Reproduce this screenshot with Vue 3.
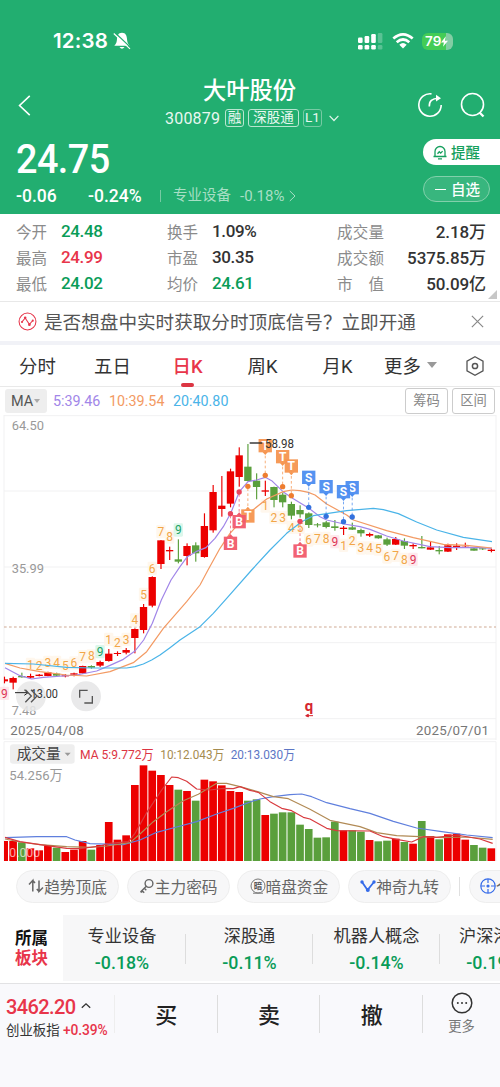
<template>
  <main>
    <header>
      <div class="status">
        <span class="time">12:38</span>
        <svg class="mute" viewBox="0 0 18 18">
          <path d="M9 .8C5.300.800 4.200 3.800 4 7 3.800 10 3.300 11.800 1.300 13.800H16.700C14.700 11.800 14.200 10 14 7 13.800 3.800 12.700.800 9 .8zM6.500 15h5Q9 18.600 6.500 15z" fill="#fff" />
          <path d="M2 .8 18 15.900" stroke="#22ae70" stroke-width="1.200" />
          <path d="M.8 1.500 17 16.900" stroke="#fff" stroke-width="1.200" />
        </svg>
        <svg class="signal" viewBox="0 0 25 17">
          <g fill="#fff">
            <rect x="0" y="4.500" width="4.600" height="5.500" rx="1.200" />
            <rect x="6.600" y="3" width="4.600" height="7" rx="1.200" />
            <rect x="13.200" y="1" width="4.600" height="9" rx="1.200" />
            <rect x="0" y="12" width="4.600" height="4.500" rx="1.200" />
            <rect x="6.600" y="12" width="4.600" height="4.500" rx="1.200" />
            <rect x="13.200" y="12" width="4.600" height="4.500" rx="1.200" />
          </g>
          <g fill="#fff" opacity=".25">
            <rect x="19.800" y="0" width="4.600" height="10" rx="1.200" />
            <rect x="19.800" y="12" width="4.600" height="4.500" rx="1.200" />
          </g>
        </svg>
        <svg class="wifi" viewBox="0 0 22 16">
          <g fill="none" stroke="#fff" stroke-width="2.700">
            <path d="M1.300 5.600Q11-2.800 20.700 5.600" />
            <path d="M4.700 9.300Q11 3.700 17.300 9.300" />
          </g>
          <path d="M7.300 11.700Q11 8.500 14.700 11.700L11 15.600z" fill="#fff" />
        </svg>
        <div class="battery">
          <span>79</span>
          <svg viewBox="0 0 8 12"><path d="M5.500 0 0 7h3.300L2.300 12 8 5H4.700z" fill="#fff" /></svg>
        </div>
      </div>
      <div class="title-row">
        <svg class="back" viewBox="0 0 12 20"><path d="M11 .8 1.300 10 11 19.200" fill="none" stroke="#fff" stroke-width="1.500" /></svg>
        <div class="title">
          <h1>大叶股份</h1>
          <div class="code">
            <span class="num">300879</span>
            <span class="tag">融</span>
            <span class="tag wide">深股通</span>
            <span class="tag dim">L1</span>
            <svg viewBox="0 0 10 7"><path d="M.6.800 5 5.500 9.400.800" fill="none" stroke="#e0f6eb" stroke-width="1.200" /></svg>
          </div>
        </div>
        <svg class="share" viewBox="0 0 26 26" fill="none" stroke="#fff" stroke-width="1.600">
          <path d="M14.500 1.900A11.200 11.200 0 1 0 24.200 13" />
          <path d="M12.300 14.500C12 9 15 6.500 21.500 6.200" />
          <path d="M19 2.800 24 6.200 19 9.600z" fill="#fff" stroke="none" />
        </svg>
        <svg class="search" viewBox="0 0 26 26" fill="none" stroke="#fff" stroke-width="1.600">
          <circle cx="12.500" cy="12.500" r="11" /><path d="m19.500 20.500 4 4" stroke-width="2.300" />
        </svg>
      </div>
      <div class="quote">
        <div>
          <div class="price num">24.75</div>
          <div class="change num">
            <span class="diff">-0.06</span>
            <span class="rate">-0.24%</span>
            <i></i>
            <span class="sector">专业设备</span>
            <span class="sector-rate">-0.18%</span>
            <svg viewBox="0 0 7 12"><path d="m.8 1 5.200 5-5.200 5" fill="none" stroke="#a7dfc5" /></svg>
          </div>
        </div>
        <div class="actions">
          <div class="remind">
            <svg viewBox="0 0 14 15" fill="none" stroke="#159f5d" stroke-width="1.300">
              <path d="M.5 11.500h13M2 11V6.500a5 5 0 0 1 10 0V11M5 13.800h4M4.500 8.700l1.800-2 1.400 1.400 1.900-2" />
            </svg>
            <span>提醒</span>
          </div>
          <div class="fav"><i></i><span>自选</span></div>
        </div>
      </div>
    </header>

    <section class="stats">
      <div v-for="(col, c) in stats" :key="c" class="stat-col">
        <div v-for="s in col" :key="s.label" class="stat">
          <span class="label"><b v-for="ch in s.label" :key="ch">{{ ch }}</b></span>
          <span class="num value" :class="s.color">{{ s.value }}</span>
        </div>
      </div>
      <svg class="corner" viewBox="0 0 9 9"><path d="M9 0v9H0z" fill="#c7c7c7" /></svg>
    </section>

    <section class="notice">
      <svg viewBox="0 0 18 18" fill="none" stroke="#e6364b">
        <circle cx="9" cy="9" r="8" /><path d="m3.800 9.300 3-3.600 4 6 3-3.400" />
        <g fill="#e6364b" stroke="none"><circle cx="3.800" cy="9.500" r="1" /><circle cx="6.800" cy="5.500" r="1.200" /><circle cx="10.800" cy="12" r="1.300" /><circle cx="14" cy="8.200" r="1" /></g>
      </svg>
      <span>是否想盘中实时获取分时顶底信号？立即开通</span>
      <svg class="close" viewBox="0 0 12 12"><path d="m.8.800 10.400 10.400m0-10.400L.8 11.200" stroke="#888" stroke-width="1.100" /></svg>
    </section>

    <nav>
      <span v-for="t in tabs" :key="t" :class="{ active: t == current }" @click="current = t">{{ t }}</span>
      <span class="more-tab">更多<i></i></span>
      <svg viewBox="0 0 20 20" fill="none" stroke="#555" stroke-width="1.300">
        <path d="M10 .8 18 5.200v9.600L10 19.200 2 14.800V5.200z" /><circle cx="10" cy="10" r="2.600" stroke-width="1.500" />
      </svg>
    </nav>

    <div class="ma-row num">
      <span class="select">MA<i></i></span>
      <span class="ma5">5:39.46</span>
      <span class="ma10">10:39.54</span>
      <span class="ma20">20:40.80</span>
      <span class="btn">筹码</span>
      <span class="btn">区间</span>
    </div>

    <!-- both charts use three units per pixel -->
    <svg class="kline" viewBox="0 15 1500 975">
      <path class="grid" d="M12 15V990M1488 15V990M12 17H1488M12 243H1488M12 471H1488M12 698H1488M12 926H1488M12 987H1488" />
      <path d="M12 651H1488" stroke="#cfaa93" stroke-width="3.500" stroke-dasharray="8 7" />
      <g class="axis">
        <text x="35" y="59" textLength="97" lengthAdjust="spacingAndGlyphs">64.50</text>
        <text x="35" y="488" textLength="97" lengthAdjust="spacingAndGlyphs">35.99</text>
        <text x="35" y="916" textLength="74" lengthAdjust="spacingAndGlyphs">7.48</text>
        <text class="date" x="31" y="976" textLength="220">2025/04/08</text>
        <text class="date" x="1248" y="976" textLength="219">2025/07/01</text>
      </g>
      <g v-for="(k, i) in candles" :key="i">
        <rect :x="cx(i) - 1.5" :y="k[3]" width="3.500" :height="k[4] - k[3]" :fill="k[0] ? up : down" />
        <rect :x="i ? cx(i) - 11 : 12" :y="k[1]" :width="i ? 22 : 12" :height="k[2] - k[1]" :fill="k[0] ? up : down" />
      </g>
      <g v-for="(n, i) in turns" :key="'n' + i">
        <rect :x="cx(n[0]) - 14" :y="n[2] - 20" width="28" height="40" rx="4" :fill="turnColor(n)[1]" opacity=".7" />
        <text class="turn" :x="cx(n[0])" :y="n[2] + 13" :fill="turnColor(n)[0]">{{ n[1] }}</text>
      </g>
      <g fill="none" stroke-width="3.600" stroke-linejoin="round">
        <polyline :points="ma5" stroke="#a186e8" />
        <polyline :points="ma10" stroke="#f39a63" />
        <polyline :points="ma20" stroke="#4ab4e8" />
      </g>
      <g v-for="(m, i) in marks" :key="'m' + i">
        <path :d="`M${cx(m[0])} ${m[2]}V${m[3]}`" :stroke="markColor[m[1]]" stroke-width="3" stroke-dasharray="8 7" opacity=".75" />
        <circle :cx="cx(m[0])" :cy="m[3]" r="8" :fill="markColor[m[1] + 'dot']" />
        <path :d="tail(m)" :fill="markColor[m[1]]" />
        <rect :x="cx(m[0]) - 20" :y="m[2] - 20" width="40" height="40" :fill="markColor[m[1]]" opacity=".95" />
        <text class="mark" :x="cx(m[0])" :y="m[2] + 13">{{ m[1] }}</text>
      </g>
      <path d="M749 99H787" stroke="#222" stroke-width="4" />
      <text class="peak" x="795" y="113" textLength="87" lengthAdjust="spacingAndGlyphs">58.98</text>
      <circle cx="93" cy="859" r="45" fill="#e7e7e8" opacity=".85" />
      <circle cx="258" cy="859" r="45" fill="#e9e9ea" />
      <path d="M45 848H84M73 840l11 8-11 8" fill="none" stroke="#222" stroke-width="3" />
      <text class="peak" x="92" y="863" textLength="82" lengthAdjust="spacingAndGlyphs">13.00</text>
      <g fill="none" stroke="#555" stroke-width="4">
        <path d="m76 839 18 19-18 19m17-38 18 19-18 19" />
        <path d="M239 863v-22h24M277 858v21h-24" />
      </g>
      <text x="927" y="903" class="q">q</text>
      <path d="M939 917h-20m6-4-8 4 8 4z" fill="#d52630" stroke="#d52630" stroke-width="3" />
    </svg>

    <svg class="volume" viewBox="0 0 1500 363">
      <path class="grid" d="M12 5V363M1488 5V363M12 5H1488" />
      <rect x="30" y="13" width="194" height="58" rx="9" fill="#eee" />
      <text x="50" y="56" class="vol-name" textLength="132">成交量</text>
      <path d="M194 38h18l-9 10z" fill="#999" />
      <g class="vol-ma">
        <text x="240" y="56" fill="#dc3543" textLength="221" lengthAdjust="spacingAndGlyphs">MA 5:9.772万</text>
        <text x="481" y="56" fill="#a58b4f" textLength="192" lengthAdjust="spacingAndGlyphs">10:12.043万</text>
        <text x="692" y="56" fill="#5c76c5" textLength="193" lengthAdjust="spacingAndGlyphs">20:13.030万</text>
      </g>
      <text class="vol-max" x="28" y="120" textLength="160" lengthAdjust="spacingAndGlyphs">54.256万</text>
      <rect v-for="(v, i) in volumes" :key="i" :x="i ? cx(i) - 11.5 : 12" :y="v" :width="i ? 23 : 12" :height="363 - v" :fill="volDown.includes(i) ? down : up" />
      <text class="zero" x="28" y="350" textLength="92" lengthAdjust="spacingAndGlyphs">0.000</text>
      <g fill="none" stroke-width="3.500" stroke-linejoin="round">
        <polyline :points="vma20" stroke="#5f7fdd" />
        <polyline :points="vma10" stroke="#b18a55" />
        <polyline :points="vma5" stroke="#d83a3e" />
      </g>
    </svg>

    <section class="chips">
      <div class="chip">
        <svg viewBox="0 0 16 16" fill="none" stroke="#666" stroke-width="1.500"><path d="M1 6.500 4.800 2.500V13.500M4.800 2.500 7 5M15 9.500 11 13.500V2.500M11 13.500 8.800 11" /></svg>趋势顶底
      </div>
      <div class="chip">
        <svg viewBox="0 0 16 16" fill="none" stroke="#666" stroke-width="1.400"><circle cx="10" cy="5.500" r="3.900" /><path d="M7.300 8.200 1.500 14M3 12.500l2.200 2.200M1.500 14h1.800M5.300 10.300l2 2" /></svg>主力密码
      </div>
      <div class="chip">
        <svg viewBox="0 0 16 16" fill="none" stroke="#777"><circle cx="8" cy="8" r="7" /><path d="M3 15.200h10" /><text x="8" y="11.200" font-size="8.500" text-anchor="middle" fill="#555" stroke="none" font-weight="700">暗</text></svg>暗盘资金
      </div>
      <div class="chip">
        <svg viewBox="0 0 16 16"><path d="m2 4 5.500 8L14 4" fill="none" stroke="#356be9" stroke-width="1.800" /><g fill="#356be9"><circle cx="2" cy="4" r="1.700" /><circle cx="7.800" cy="12" r="2" /><circle cx="14" cy="4" r="1.700" /></g></svg>神奇九转
      </div>
      <i></i>
      <div class="chip last">
        <svg viewBox="0 0 16 16" fill="none" stroke="#356be9" stroke-width="1.200"><circle cx="8" cy="8" r="7.200" /><path d="M8 1v4m0 6v4M1 8h4m6 0h4" /><circle cx="8" cy="8" r="1" fill="#356be9" /></svg>个股
      </div>
    </section>

    <section class="sectors">
      <div class="belong"><b>所属</b><b class="red">板块</b></div>
      <div class="sector-list">
        <div v-for="s in sectors" :key="s.name" class="sector-item">
          <span>{{ s.name }}</span>
          <span class="num green">{{ s.rate }}</span>
        </div>
      </div>
    </section>

    <footer>
      <div class="index">
        <div class="num red point">3462.20<svg viewBox="0 0 10 7"><path d="m.8 5.800 4.200-4 4.200 4" fill="none" stroke="#333" stroke-width="1.300" /></svg></div>
        <div class="index-name">创业板指 <span class="num red">+0.39%</span></div>
      </div>
      <div class="trade">买</div>
      <div class="trade">卖</div>
      <div class="trade">撤</div>
      <div class="more">
        <svg viewBox="0 0 22 22"><circle cx="11" cy="11" r="9.800" fill="none" stroke="#333" stroke-width="1.500" /><g fill="#333"><circle cx="6.800" cy="11" r="1" /><circle cx="11" cy="11" r="1" /><circle cx="15.200" cy="11" r="1" /></g></svg>
        更多
      </div>
    </footer>
  </main>
</template>

<script setup>
  import { ref } from "vue";

  const up = "#ec0000";
  const down = "#5a9f3c";

  const stats = [
    [
      { label: "今开", value: "24.48", color: "green" },
      { label: "最高", value: "24.99", color: "red" },
      { label: "最低", value: "24.02", color: "green" },
    ],
    [
      { label: "换手", value: "1.09%" },
      { label: "市盈", value: "30.35" },
      { label: "均价", value: "24.61", color: "green" },
    ],
    [
      { label: "成交量", value: "2.18万" },
      { label: "成交额", value: "5375.85万" },
      { label: "市值", value: "50.09亿" },
    ],
  ];

  const tabs = ["分时", "五日", "日K", "周K", "月K"];
  const current = ref("日K");

  const sectors = [
    { name: "专业设备", rate: "-0.18%" },
    { name: "深股通", rate: "-0.11%" },
    { name: "机器人概念", rate: "-0.14%" },
    { name: "沪深港通", rate: "-0.19%" },
  ];

  const cx = (i) => 13.2 + i * 26.085;

  // rising, body top, body bottom, high, low
  const candles = [
    [1, 808, 814, 800, 820], [1, 804, 818, 800, 838], [0, 798, 802, 788, 803], [1, 798, 803, 791, 806],
    [1, 794, 798, 792, 799], [1, 787, 798, 785, 799], [0, 791, 797, 788, 800], [1, 796, 799, 792, 802],
    [1, 790, 794, 788, 799], [1, 768, 790, 767, 791], [0, 768, 773, 766, 776], [1, 756, 767, 752, 771],
    [1, 731, 753, 717, 755], [1, 729, 732, 724, 738], [1, 720, 728, 714, 733], [1, 657, 684, 655, 730],
    [1, 591, 660, 582, 670], [1, 501, 587, 499, 592], [1, 391, 462, 390, 477], [1, 420, 424, 410, 450],
    [0, 448, 455, 388, 460], [1, 408, 438, 400, 466], [0, 406, 430, 397, 455], [1, 348, 441, 310, 443],
    [1, 246, 361, 225, 368], [1, 287, 297, 198, 320], [1, 184, 281, 176, 292], [1, 136, 201, 112, 230],
    [0, 170, 213, 102, 214], [0, 212, 231, 190, 268], [1, 241, 245, 212, 258], [0, 231, 270, 230, 292],
    [0, 254, 277, 248, 292], [0, 282, 317, 275, 328], [0, 300, 313, 286, 323], [0, 310, 345, 307, 354],
    [0, 343, 346, 339, 352], [0, 337, 351, 333, 355], [0, 349, 354, 330, 362], [1, 353, 357, 348, 375],
    [0, 352, 359, 338, 360], [0, 360, 370, 356, 380], [1, 372, 377, 368, 381], [0, 376, 385, 375, 386],
    [0, 388, 404, 383, 408], [1, 387, 404, 381, 405], [0, 393, 407, 385, 417], [1, 405, 409, 400, 417],
    [0, 411, 415, 378, 415], [1, 412, 419, 393, 420], [0, 420, 424, 408, 433], [1, 406, 425, 401, 426],
    [1, 407, 412, 400, 420], [1, 410, 412, 398, 412], [0, 415, 422, 414, 422], [0, 415, 418, 414, 420],
    [1, 419, 423, 414, 427],
  ];

  const turns = [
    [0, 9, 850, "red"],
    [3, 1, 763], [4, 2, 766], [5, 3, 757], [6, 4, 757], [7, 5, 766], [8, 6, 759], [9, 7, 740], [10, 8, 738],
    [11, 9, 725, "green"],
    [12, 1, 688], [13, 2, 698], [14, 3, 688], [15, 4, 630], [16, 5, 553], [17, 6, 475], [18, 7, 365], [19, 8, 381],
    [20, 9, 360, "green"],
    [30, 1, 288], [31, 2, 322], [32, 3, 323], [33, 4, 352], [34, 5, 352], [35, 6, 390], [36, 7, 385], [37, 8, 385],
    [38, 9, 395, "red"],
    [39, 1, 406], [40, 2, 392], [41, 3, 414], [42, 4, 414], [43, 5, 417], [44, 6, 441], [45, 7, 436], [46, 8, 448],
    [47, 9, 448, "red"],
  ];

  const turnColor = (n) => {
    if (n[3] == "red") return ["#dd3656", "#fde0e4"];
    if (n[3] == "green") return ["#21a366", "#cdf3e2"];
    return ["#f2a648", "#fff4e6"];
  };

  // candle index, letter, box centre, dot centre
  const marks = [
    [26, "B", 400, 311], [28, "T", 318, 229], [27, "B", 335, 246], [30, "T", 107, 196], [32, "T", 140, 230],
    [33, "T", 168, 257], [34, "B", 423, 334], [35, "S", 202, 292], [37, "S", 230, 319], [40, "S", 233, 321],
    [39, "S", 245, 335],
  ];

  const markColor = {
    B: "#f15a6b",
    Bdot: "#e9455c",
    T: "#f6954f",
    Tdot: "#ee7d30",
    S: "#4c8df0",
    Sdot: "#3271de",
  };

  const tail = (m) => {
    const dir = m[3] > m[2] ? 1 : -1;
    const y = m[2] + dir * 19;
    return `M${cx(m[0]) - 8} ${y}h16l-8 ${dir * 9}z`;
  };

  const ma5 =
    "15,773 60,797 95,807 130,802 230,795 290,783 330,766 370,748 405,723 431,690 457,640 484,570 513,510 540,470 562,440 588,425 618,413 645,385 670,350 692,310 718,245 744,215 770,210 796,202 815,212 849,245 880,266 927,295 960,320 980,330 1032,342 1080,350 1110,358 1160,378 1210,393 1290,410 1350,413 1430,412 1476,415";
  const ma10 =
    "15,760 60,774 120,785 200,795 260,798 330,785 400,758 440,725 490,655 560,575 600,525 624,480 660,415 690,370 740,315 800,267 850,245 875,240 900,242 925,247 945,255 980,282 1040,315 1060,330 1160,362 1240,383 1330,403 1400,406 1476,414";
  const ma20 =
    "15,760 100,762 200,772 280,774 380,774 405,770 430,762 455,750 480,735 510,713 540,690 600,650 640,610 680,565 755,480 810,420 860,370 905,335 940,317 980,311 1040,302 1120,295 1150,299 1195,311 1250,336 1310,360 1390,382 1476,395";

  // top edge of every bar
  const volumes = [
    303, 303, 307, 325, 331, 317, 323, 336, 329, 303, 329, 315, 246, 299, 286, 135, 76, 92, 105, 135, 149, 153, 182,
    119, 124, 136, 153, 156, 182, 178, 225, 221, 217, 217, 254, 267, 293, 292, 245, 271, 271, 275, 300, 304, 302, 296,
    306, 311, 243, 288, 298, 283, 281, 299, 315, 323, 325,
  ];
  const volDown = [2, 6, 10, 20, 22, 28, 29, 31, 32, 33, 34, 35, 36, 37, 38, 40, 41, 43, 44, 46, 48, 50, 54, 55];

  const vma5 =
    "15,292 60,305 120,314 200,325 240,326 300,318 330,310 385,305 405,280 440,218 485,150 515,111 535,113 560,124 590,147 630,150 670,145 700,146 720,140 750,151 775,157 810,185 845,205 875,212 910,232 930,237 980,265 1010,272 1110,273 1150,290 1190,298 1235,306 1270,290 1310,292 1370,285 1440,297 1478,310";
  const vma10 =
    "15,297 60,306 120,314 200,320 270,322 320,318 390,308 420,282 460,245 500,215 550,182 595,163 650,130 680,130 720,140 770,154 820,170 865,176 930,208 990,241 1080,260 1130,278 1190,287 1260,290 1330,293 1400,291 1478,298";
  const vma20 =
    "15,293 110,290 200,290 225,300 270,311 370,314 420,300 470,277 530,261 590,245 650,222 700,205 750,186 780,177 820,170 870,164 905,162 935,170 980,188 1050,206 1110,220 1180,244 1250,264 1320,274 1400,285 1478,293";
</script>

<style>
  body {
    background: #f9f9fc;
    overflow: hidden;
  }
</style>

<style scoped>
  * {
    box-sizing: border-box;
  }
  main {
    width: 500px;
    height: 1087px;
    background: #fff;
    font-family: Roboto, "Noto Sans CJK SC", sans-serif;
    color: #333;
    overflow: hidden;
    display: flex;
    flex-direction: column;
  }
  main > * {
    flex-shrink: 0;
  }
  svg {
    flex-shrink: 0;
  }
  .green {
    color: #099c58;
  }
  .red {
    color: #e8354a;
  }
  header {
    height: 214px;
    background: #22ae70;
    color: #fff;
  }

  .status {
    padding: 27px 44px 0 53px;
    display: flex;
    align-items: center;
    height: 55px;
  }
  .time {
    font: 600 20.5px/28px Inter, sans-serif;
    letter-spacing: 0.2px;
    width: 60px;
  }
  .mute {
    width: 18px;
    height: 18px;
  }
  .signal {
    width: 25px;
    height: 17px;
    margin-left: auto;
  }
  .wifi {
    width: 22px;
    height: 16px;
    margin-left: 9px;
  }
  .battery {
    width: 31px;
    height: 17px;
    border-radius: 6px;
    margin: 0 3px 0 8px;
    background: linear-gradient(90deg, #43cc56 79%, #83cda4 79%);
    display: flex;
    align-items: center;
    padding-left: 3px;
    font: 600 13.5px/17px Inter, sans-serif;
  }
  .battery svg {
    width: 7px;
    height: 11px;
  }
  .title-row {
    height: 79px;
    padding: 20px 14px 0 18px;
    display: flex;
    align-items: flex-start;
  }
  .back {
    width: 13px;
    height: 21px;
    margin-top: 20px;
  }
  .title {
    margin-left: 134px;
    width: 180px;
    flex-shrink: 0;
  }
  h1 {
    margin: 1px 0 0 -5px;
    width: 179px;
    font-size: 23.3px;
    line-height: 30px;
    font-weight: 500;
    text-align: center;
  }
  .code {
    display: flex;
    align-items: center;
    height: 24px;
    color: #e9f8f1;
  }
  .code .num {
    font-size: 16px;
    letter-spacing: 0.2px;
    width: 60px;
  }
  .tag {
    border: 1px solid #b8e5d0;
    border-radius: 3px;
    height: 18px;
    width: 19px;
    font-size: 13.5px;
    line-height: 15px;
    text-align: center;
    margin-right: 4px;
  }
  .tag.wide {
    width: 51px;
  }
  .tag.dim {
    border-color: #76caa3;
  }
  .code svg {
    width: 10px;
    height: 7px;
    margin-left: 3px;
  }
  .share {
    width: 26px;
    height: 26px;
    margin: 17px 0 0 72px;
  }
  .search {
    width: 26px;
    height: 26px;
    margin: 17px 0 0 auto;
  }
  .quote {
    display: flex;
    justify-content: space-between;
    padding: 5px 0 0 16px;
  }
  .price {
    font-size: 40px;
    line-height: 42px;
    font-weight: 500;
    letter-spacing: -0.6px;
    transform: scaleX(0.945);
    transform-origin: left;
  }
  .change {
    display: flex;
    align-items: center;
    font-size: 17.5px;
    line-height: 24px;
    margin-top: 3px;
    font-weight: 500;
  }
  .diff {
    width: 72px;
  }
  .rate {
    width: 72px;
  }
  .change i {
    width: 1px;
    height: 12px;
    background: #76caa3;
    margin-right: 12px;
  }
  .sector,
  .sector-rate {
    font-weight: 400;
    font-size: 14.5px;
    color: #a7dfc5;
  }
  .sector-rate {
    font-size: 15px;
    margin: 0 5px 0 9px;
  }
  .change svg {
    width: 7px;
    height: 12px;
  }
  .remind {
    width: 77px;
    height: 26px;
    background: #fff;
    border-radius: 13px 0 0 13px;
    color: #159f5d;
    font-size: 14.5px;
    font-weight: 500;
    display: flex;
    align-items: center;
    padding-left: 10px;
  }
  .actions span {
    margin-top: -2px;
  }
  .remind svg {
    width: 14px;
    height: 15px;
    margin-right: 4px;
  }
  .fav {
    width: 67px;
    height: 26px;
    border: 1px solid #82d0ab;
    background: #38b67e;
    border-radius: 13px;
    margin-top: 11px;
    font-size: 14.5px;
    font-weight: 500;
    display: flex;
    align-items: center;
    padding-left: 11px;
  }
  .fav i {
    width: 11px;
    height: 1px;
    background: #fff;
    margin-right: 5px;
  }

  .stats {
    height: 88px;
    padding: 4px 14px 0 16px;
    display: flex;
    border-bottom: 1px solid #e8e8e8;
    position: relative;
  }
  .stat-col {
    width: 151px;
  }
  .stat-col:nth-child(2) {
    width: 170px;
  }
  .stat-col:nth-child(3) {
    width: 149px;
  }
  .stat {
    height: 26px;
    display: flex;
    align-items: center;
  }
  .label {
    color: #8b8b8b;
    font-size: 15.5px;
    width: 45px;
    display: flex;
    margin-top: -1px;
  }
  .label b {
    font-weight: 400;
  }
  .stat-col:nth-child(3) .label {
    width: 47px;
    justify-content: space-between;
  }
  .value {
    font-size: 17px;
    font-weight: 500;
    letter-spacing: -0.35px;
  }
  .stat-col:nth-child(3) .value {
    margin-left: auto;
    letter-spacing: -0.1px;
    margin-top: -1px;
  }
  .corner {
    position: absolute;
    right: 3px;
    bottom: 2px;
    width: 9px;
    height: 9px;
  }

  .notice {
    height: 43px;
    border-bottom: 4px solid #f1f2f7;
    padding: 0 16px 0 18px;
    display: flex;
    align-items: center;
    font-size: 18.6px;
    color: #555;
  }
  .notice span {
    margin-top: -2px;
  }
  .notice svg {
    width: 19px;
    height: 19px;
    margin-right: 7px;
  }
  .notice svg.close {
    width: 13px;
    height: 13px;
    margin: 0 0 0 auto;
  }

  nav {
    height: 42px;
    border-bottom: 1px solid #e9e9e9;
    padding: 0 15px 0 0;
    display: flex;
    align-items: center;
    font-size: 18.4px;
  }
  nav span {
    display: flex;
    align-items: center;
    justify-content: center;
    width: 75px;
    height: 42px;
    padding-bottom: 1px;
    position: relative;
  }
  nav span.more-tab {
    width: 60px;
    margin-left: 9px;
    justify-content: flex-start;
  }
  nav span i {
    border: 5px solid transparent;
    border-top: 6px solid #999;
    border-bottom: 0;
    margin-left: 6px;
    flex-shrink: 0;
  }
  nav span.active {
    color: #e8354a;
    font-weight: 500;
  }
  .active::after {
    content: "";
    position: absolute;
    width: 13px;
    height: 4px;
    border-radius: 2px;
    left: 31px;
    bottom: 0;
    background: #dc3543;
  }
  nav svg {
    width: 20px;
    height: 20px;
    margin-left: auto;
  }

  .ma-row {
    height: 28px;
    padding: 0 5px;
    display: flex;
    align-items: center;
    font-size: 14.3px;
  }
  .select {
    background: #eee;
    width: 42px;
    height: 24px;
    border-radius: 3px;
    display: flex;
    align-items: center;
    padding-left: 6px;
    font-size: 14.5px;
    margin-right: 6px;
    color: #555;
  }
  .select i {
    border: 3px solid transparent;
    border-top: 4px solid #aaa;
    border-bottom: 0;
    margin-left: 1px;
  }
  .ma5 {
    color: #a186e8;
    width: 56px;
  }
  .ma10 {
    color: #f39a63;
    width: 64px;
  }
  .ma20 {
    color: #4ab4e8;
    margin-right: auto;
  }
  .btn {
    width: 43px;
    height: 26px;
    line-height: 23px;
    border: 1px solid #ccc;
    border-radius: 3px;
    margin-left: 4px;
    text-align: center;
    font-size: 13.3px;
    color: #888;
  }

  .kline {
    width: 500px;
    height: 325px;
    display: block;
  }
  .grid {
    fill: none;
    stroke: #f1f1f2;
    stroke-width: 3;
  }
  .axis {
    font-size: 41px;
    fill: #999;
  }
  .date {
    font-size: 40px;
    fill: #777;
  }
  .turn {
    font-size: 36px;
    text-anchor: middle;
  }
  .mark {
    font-size: 36px;
    font-weight: 700;
    fill: #fff;
    text-anchor: middle;
  }
  .peak {
    font-size: 38px;
    fill: #333;
  }
  .q {
    font: 700 42px "Noto Sans", sans-serif;
    text-anchor: middle;
    fill: #d52630;
  }
  .volume {
    width: 500px;
    height: 121px;
    display: block;
  }
  .vol-name {
    font-size: 44px;
    fill: #444;
  }
  .vol-ma {
    font-size: 38px;
  }
  .vol-max {
    font-size: 41px;
    fill: #999;
  }
  .zero {
    font-size: 40px;
    fill: #fff;
    opacity: 0.65;
  }

  .chips {
    height: 54px;
    padding: 9px 0 12px 16px;
    display: flex;
    align-items: center;
    overflow: hidden;
  }
  .chip {
    width: 103px;
    height: 33px;
    background: #f7f7f8;
    border: 1px solid #eee;
    border-radius: 17px;
    margin-right: 7.7px;
    padding-bottom: 1px;
    flex-shrink: 0;
    display: flex;
    align-items: center;
    justify-content: center;
    font-size: 15.7px;
    color: #666;
    white-space: nowrap;
  }
  .chip svg {
    width: 16px;
    height: 16px;
  }
  .chips i {
    width: 1px;
    height: 19px;
    background: #e0e0e0;
    margin-right: 9px;
    flex-shrink: 0;
  }
  .chip.last {
    justify-content: flex-start;
    padding-left: 10px;
  }

  .sectors {
    height: 69px;
    display: flex;
    border-bottom: 1px solid #e2e2e4;
    padding-bottom: 2px;
  }
  .belong {
    width: 63px;
    flex-shrink: 0;
    padding: 14px 0 0 15px;
    display: flex;
    flex-direction: column;
    font-size: 16.5px;
    line-height: 19.5px;
    color: #111;
  }
  .belong .red {
    color: #e8354a;
  }
  .sector-list {
    display: flex;
    width: 437px;
    overflow: hidden;
    background: #f7f7f8;
  }
  .sector-item {
    width: 127px;
    flex-shrink: 0;
    display: flex;
    flex-direction: column;
    align-items: center;
    padding-top: 9px;
    font-size: 17.2px;
    line-height: 25px;
    background: linear-gradient(#ddd, #ddd) right 19px / 1px 30px no-repeat;
  }
  .sector-item:first-child {
    width: 123px;
    padding-right: 5px;
  }
  .sector-item:last-child {
    padding-right: 20px;
  }
  .sector-item .num {
    font-weight: 500;
    font-size: 17.8px;
    padding-top: 1px;
  }

  footer {
    height: 103px;
    background: #f9f9fc;
    display: flex;
    align-items: flex-start;
  }
  .index {
    width: 115px;
    height: 60px;
    padding: 11px 0 0 6px;
    white-space: nowrap;
    background: linear-gradient(#eee, #eee) right 11px / 1px 38px no-repeat;
  }
  .point {
    font-size: 20px;
    line-height: 25px;
    font-weight: 500;
    letter-spacing: -0.6px;
  }
  .point svg {
    width: 10px;
    height: 7px;
    margin: 0 0 5px 5px;
  }
  .index-name {
    font-size: 13.4px;
    line-height: 20px;
  }
  .index-name .num {
    font-size: 13.8px;
    font-weight: 500;
    letter-spacing: -0.1px;
  }
  .trade {
    width: 102.7px;
    height: 60px;
    font-size: 22px;
    font-weight: 500;
    line-height: 63px;
    text-align: center;
    color: #222;
    background: linear-gradient(#ddd, #ddd) right 11px / 1px 38px no-repeat;
  }
  .more {
    flex: 1;
    display: flex;
    flex-direction: column;
    align-items: center;
    font-size: 13.3px;
    line-height: 20px;
    color: #777;
    padding-top: 8px;
  }
  .more svg {
    width: 22px;
    height: 22px;
    margin-bottom: 3px;
  }
</style>
